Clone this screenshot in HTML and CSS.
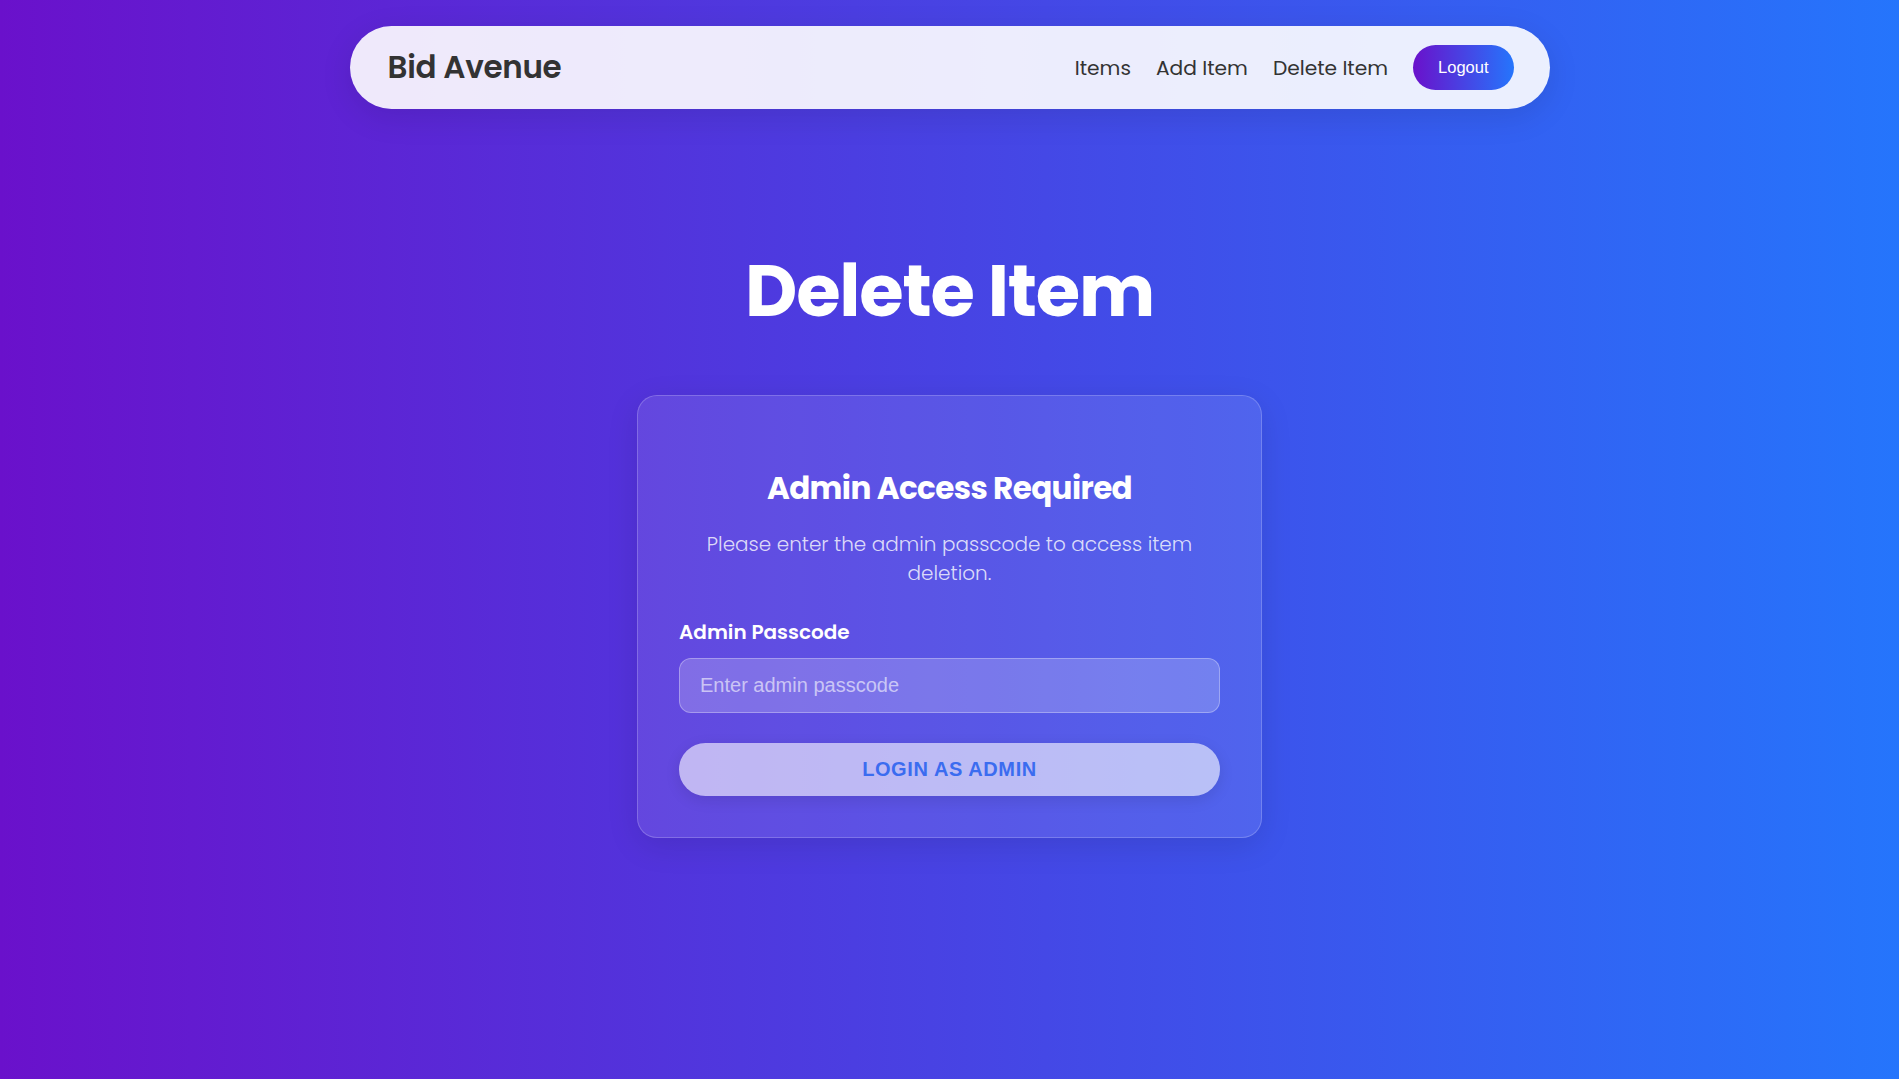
FILE: index.html
```html
<!DOCTYPE html>
<html lang="en">
<head>
<meta charset="utf-8">
<title>Bid Avenue - Delete Item</title>
<link rel="stylesheet" href="styles.css">
</head>
<body>
<header class="header">
  <nav class="navbar">
    <div class="brand">Bid Avenue</div>
    <div class="nav-links">
      <a class="nav-link" href="#">Items</a>
      <a class="nav-link" href="#">Add Item</a>
      <a class="nav-link" href="#">Delete Item</a>
      <button class="logout-btn" type="button">Logout</button>
    </div>
  </nav>
</header>
<main class="main">
  <h1 class="page-title">Delete Item</h1>
  <section class="card">
    <h2 class="card-title">Admin Access Required</h2>
    <p class="card-text">Please enter the admin passcode to access item deletion.</p>
    <form class="form">
      <label class="form-label" for="passcode">Admin Passcode</label>
      <input class="form-input" id="passcode" type="password" placeholder="Enter admin passcode">
      <button class="submit-btn" type="button">LOGIN AS ADMIN</button>
    </form>
  </section>
</main>
</body>
</html>
```
FILE: styles.css
```css
* {
  box-sizing: border-box;
}

html, body {
  margin: 0;
  padding: 0;
}

body {
  min-height: 100vh;
  background: linear-gradient(90deg, #6a11cb 0%, #2575fc 100%);
  font-family: "Poppins", "Inter", "Noto Sans", sans-serif;
  color: #fff;
}

.header {
  padding-top: 26px;
}

.navbar {
  width: 1200px;
  height: 83px;
  margin: 0 auto;
  padding: 0 36px 0 38px;
  display: flex;
  align-items: center;
  justify-content: space-between;
  background: rgba(255, 255, 255, 0.9);
  border-radius: 50px;
  box-shadow: 0 8px 32px rgba(0, 0, 0, 0.1);
}

.brand {
  font-size: 31px;
  font-weight: 600;
  color: #333;
  letter-spacing: -0.3px;
}

.nav-links {
  display: flex;
  align-items: center;
  gap: 25px;
}

.nav-link {
  font-size: 20.2px;
  font-weight: 400;
  color: #333;
  text-decoration: none;
}

.logout-btn {
  height: 45px;
  padding: 0 25px;
  border: none;
  border-radius: 25px;
  background: linear-gradient(90deg, #6a11cb 0%, #2575fc 100%);
  color: #fff;
  font-family: "Liberation Sans", Arial, sans-serif;
  font-size: 16.5px;
  cursor: pointer;
}

.main {
  display: flex;
  flex-direction: column;
  align-items: center;
}

.page-title {
  margin: 139px 0 0;
  font-size: 72px;
  line-height: 1.2;
  font-weight: 700;
  letter-spacing: -1.2px;
  color: #fff;
}

.card {
  width: 625px;
  margin-top: 61px;
  padding: 41px;
  background: rgba(255, 255, 255, 0.1);
  border: 1px solid rgba(255, 255, 255, 0.2);
  border-radius: 20px;
  box-shadow: 0 8px 32px rgba(0, 0, 0, 0.1);
  text-align: center;
}

.card-title {
  margin: 30px 0 0;
  font-size: 31px;
  line-height: 1.4;
  font-weight: 700;
  letter-spacing: -0.6px;
}

.card-text {
  margin: 19px 0 30px;
  font-size: 20px;
  line-height: 29px;
  font-weight: 300;
  color: rgba(255, 255, 255, 0.8);
}

.form {
  display: flex;
  flex-direction: column;
  text-align: left;
}

.form-label {
  margin-bottom: 12px;
  font-size: 20px;
  line-height: 1.4;
  font-weight: 600;
  color: #fff;
}

.form-input {
  width: 100%;
  height: 55px;
  padding: 0 20px;
  border: 1px solid rgba(255, 255, 255, 0.3);
  border-radius: 12px;
  background: rgba(255, 255, 255, 0.2);
  color: #fff;
  font-family: "Liberation Sans", Arial, sans-serif;
  font-size: 20px;
  outline: none;
}

.form-input::placeholder {
  color: rgba(255, 255, 255, 0.6);
}

.submit-btn {
  width: 100%;
  height: 53px;
  margin-top: 30px;
  border: none;
  border-radius: 27px;
  background: rgba(255, 255, 255, 0.6);
  color: #3b6cf0;
  font-family: "Liberation Sans", Arial, sans-serif;
  font-size: 20px;
  font-weight: 700;
  letter-spacing: 0.6px;
  box-shadow: 0 4px 15px rgba(0, 0, 0, 0.1);
  cursor: pointer;
}
```
